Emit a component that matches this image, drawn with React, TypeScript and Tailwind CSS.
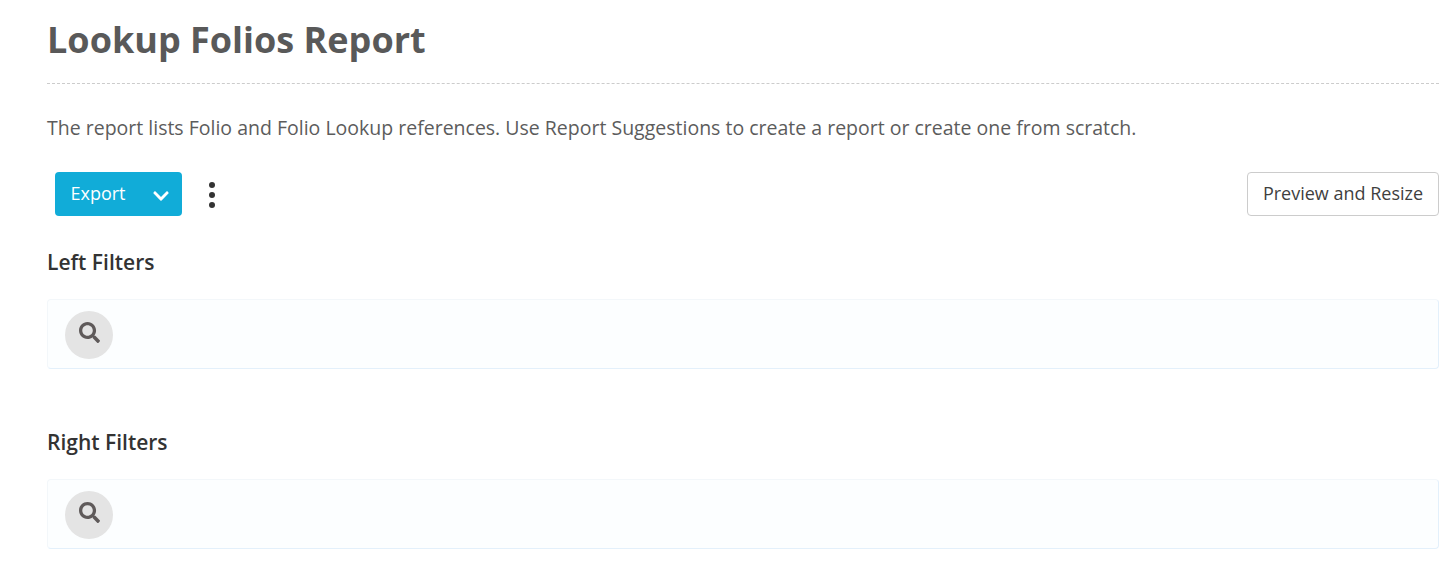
import React from 'react';
import { FaSearch, FaChevronDown } from 'react-icons/fa';

const FilterBox: React.FC<{ title: string; className?: string }> = ({ title, className = '' }) => (
  <div className={className}>
    <h3 className="text-[21px] leading-[28px] font-semibold text-[#333] h-[28px]">{title}</h3>
    <div className="mt-[23px] h-[70px] bg-[#fcfeff] rounded-[4px] border border-[#f3f7fa] border-b-[#e3f0fb] border-r-[#e3f0fb] flex items-center pl-[17px] pt-[2px]">
      <div className="w-12 h-12 rounded-full bg-[#e4e4e4] flex items-center justify-center">
        <FaSearch className="w-[21px] h-[21px] text-[#5f5a5a] -mt-[6px]" />
      </div>
    </div>
  </div>
);

export default function App() {
  return (
    <div className="pl-[47px] pr-[16px] bg-white h-[568px] overflow-hidden font-['Open_Sans',sans-serif]">
      <h1 className="text-[36px] leading-[48px] font-bold text-[#595959] pt-[16px] box-content">Lookup Folios Report</h1>
      <div className="mt-[19px] border-t border-dashed border-[#ccc]" />
      <p className="mt-[31px] text-[19.5px] leading-[26px] text-[#5c5c5c]">
        The report lists Folio and Folio Lookup references. Use Report Suggestions to create a report or create one from scratch.
      </p>
      <div className="mt-[31px] flex items-center justify-between">
        <div className="flex items-center ml-[8px]">
          <button className="w-[127px] h-[44px] bg-[#11acd8] rounded-[4px] text-white text-[18px] flex items-center justify-between pl-[15.5px] pr-[12px] pb-[2px]">
            Export
            <FaChevronDown className="w-[18px] h-[18px] mt-[6px]" />
          </button>
          <div className="ml-[27px] mt-[2px] flex flex-col gap-[4px]">
            <span className="w-[6px] h-[6px] rounded-full bg-[#333]" />
            <span className="w-[6px] h-[6px] rounded-full bg-[#333]" />
            <span className="w-[6px] h-[6px] rounded-full bg-[#333]" />
          </div>
        </div>
        <button className="w-[192px] h-[44px] bg-white border border-[#ccc] rounded-[4px] text-[18px] text-[#3f3f3f] pb-[2px]">
          Preview and Resize
        </button>
      </div>
      <FilterBox title="Left Filters" className="mt-[32px]" />
      <FilterBox title="Right Filters" className="mt-[59px]" />
    </div>
  );
}
